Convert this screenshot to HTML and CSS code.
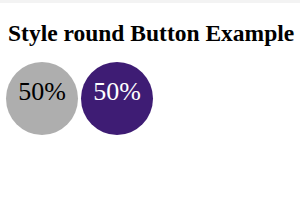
FILE: index.html
```html
<!DOCTYPE html>
<html lang="en">
<head>
  <meta charset="UTF-8">
  <meta name="viewport" content="width=device-width, initial-scale=1.0">
  <title>Style round Button Example</title>
  <link rel="stylesheet" href="styles.css">
</head>
<body>

  <div class="top-strip"></div>

  <div class="container">
    <h2>Style round Button Example</h2>

    <!-- Round Buttons -->
    <div class="button-row">
      <button class="round-btn gray">50%</button>
      <button class="round-btn purple">50%</button>
    </div>
  </div>

</body>
</html>
```

FILE: styles.css
```css
/* Global Styles */
body {
  font-family: 'Liberation Serif', 'Times New Roman', serif;
  background-color: #ffffff;
  color: #000;
  margin: 0;
  padding: 0;
}

.top-strip {
  height: 3px;
  background-color: #f3f3f3;
}

.container {
  padding: 0 6px;
}

h2 {
  font-size: 23.5px;
  font-weight: bold;
  margin: 17px 0 0 2px;
  line-height: 26px;
  white-space: nowrap;
}

/* Round Buttons */
.button-row {
  display: flex;
  gap: 3px;
  margin-top: 16px;
}

.round-btn {
  width: 72px;
  height: 73px;
  border: none;
  border-radius: 50%;
  font-family: 'Liberation Serif', 'DejaVu Serif', serif;
  font-weight: normal;
  font-size: 26px;
  line-height: 26px;
  padding: 0 0 14px 0;
  cursor: pointer;
}

.gray {
  background-color: #aeaeae;
  color: #000;
}

.purple {
  background-color: #3e1c74;
  color: #fff;
}
```
